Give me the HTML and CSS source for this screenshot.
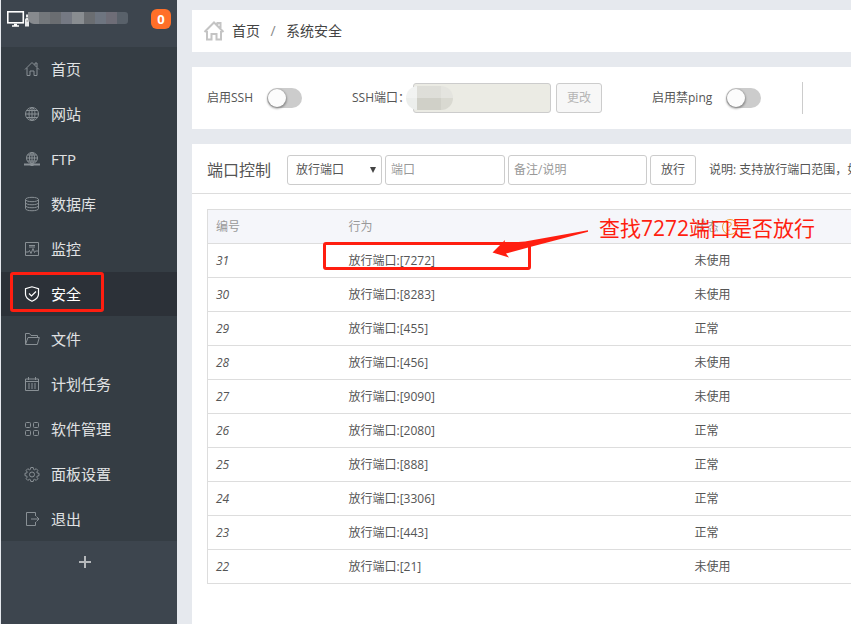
FILE: index.html
```html
<!DOCTYPE html>
<html lang="zh-CN">
<head>
<meta charset="utf-8">
<title>系统安全</title>
<link rel="stylesheet" href="styles.css">
</head>
<body>
<div class="layout">
  <aside class="sidebar">
    <header class="host">
      <svg class="host-icon" viewBox="0 0 22 18" fill="none" stroke="#fff"><rect x=".8" y="1.800" width="15.500" height="11" stroke-width="1.600"/><path d="M5 16h7M7 14.500h3" stroke-width="1.600"/><path d="M19 4.500h3v3h-3zM18 9.500l1-1.500h3v8.500h-4z" fill="#e8e9ea" stroke="none"/><path d="M19.500 11h2" stroke="#888"/></svg>
      <span class="mosaic"><i class="m1"></i><i class="m2"></i><i class="m3"></i><i class="m4"></i><i class="m5"></i><i class="m3"></i><i class="m6"></i><i class="m7"></i><i class="m8"></i></span>
      <span class="badge">0</span>
    </header>
    <nav class="menu">
      <a href="#"><svg viewBox="0 0 16 16"><path d="M1 8.500 8 1.500l7 7M3 7v7.500h3V10h4v4.500h3V7M11 4V2h2v4"/></svg>首页</a>
      <a href="#"><svg viewBox="0 0 16 16"><circle cx="8" cy="8" r="6.500"/><ellipse cx="8" cy="8" rx="3" ry="6.500"/><path d="M8 1.500v13M1.500 8h13M2.500 4.500h11M2.500 11.500h11"/></svg>网站</a>
      <a href="#"><svg viewBox="0 0 16 16"><circle cx="8" cy="7" r="5.500"/><ellipse cx="8" cy="7" rx="2.500" ry="5.500"/><path d="M8 1.500v11M2.500 7h11M3.500 4h9M3.500 10h9"/><path d="M0 13.500h16M6.500 14h3" stroke-width="2"/></svg>FTP</a>
      <a href="#"><svg viewBox="0 0 16 16"><ellipse cx="8" cy="3.500" rx="6.500" ry="2.200"/><path d="M1.500 3.500v9c0 3 13 3 13 0v-9M1.500 6.500c0 3 13 3 13 0M1.500 9.500c0 3 13 3 13 0"/></svg>数据库</a>
      <a href="#"><svg viewBox="0 0 16 16"><path d="M1.500 1.500h13v13h-13zM5 4.500h6M5 6h6M2 11h2.500l1-1.500 1.500 3 2-5 1.500 4 1-1.500h3"/></svg>监控</a>
      <a href="#" class="active" aria-current="page"><svg viewBox="0 0 16 16"><path d="M8 .8 1.500 2.800v5.500c0 3.500 3.500 5.700 6.500 7 3-1.300 6.500-3.500 6.500-7V2.800zM5 7.500l2.500 2.500L12 5.500"/></svg>安全</a>
      <a href="#"><svg viewBox="0 0 16 16"><path d="M1.500 13V2.500h4l1.500 2h6.500v2M1.500 13.500 4 6.500h11.300l-2 7z"/></svg>文件</a>
      <a href="#"><svg viewBox="0 0 16 16"><path d="M1.500 3h13v11.500h-13zM1.500 5.500h13M4.500 1v3M11.500 1v3"/><path d="M4 8h8M4 10h8M4 12h8" stroke-dasharray="2 1"/></svg>计划任务</a>
      <a href="#"><svg viewBox="0 0 16 16"><rect x="1.500" y="1.500" width="5" height="5" rx="1"/><rect x="9.500" y="1.500" width="5" height="5" rx="1"/><rect x="1.500" y="9.500" width="5" height="5" rx="1"/><rect x="9.500" y="9.500" width="5" height="5" rx="1"/></svg>软件管理</a>
      <a href="#"><svg viewBox="0 0 16 16"><path d="M6.800 1.500h2.400l.4 1.900 1 .4 1.600-1.100 1.700 1.700-1.100 1.600.4 1 1.800.3v2.400l-1.800.4-.4 1 1.100 1.600-1.700 1.700-1.600-1.100-1 .4-.4 1.800H6.800l-.4-1.800-1-.4-1.600 1.100-1.700-1.700 1.100-1.600-.4-1L1 9.700V7.300L2.800 7l.4-1-1.100-1.600 1.700-1.700 1.600 1.100 1-.4z"/><circle cx="8" cy="8.500" r="2.500"/></svg>面板设置</a>
      <a href="#"><svg viewBox="0 0 16 16"><path d="M11.500 5V1.500h-9v13h9V11M7 8h8M12.500 5.500 15 8l-2.500 2.500"/></svg>退出</a>
    </nav>
    <button class="add" type="button" aria-label="添加"><svg viewBox="0 0 14 14"><path d="M7 1v12M1 7h12"/></svg></button>
  </aside>

  <main class="main">
    <nav class="card crumbs">
      <svg viewBox="0 0 22 22"><path d="M1.500 12 11 2.500l9.500 9.500M4 11v8.500h4.500V14h5v5.500H18V11M14.500 5V3h3v6"/></svg>
      <a href="#">首页</a><span class="slash">/</span><span>系统安全</span>
    </nav>

    <section class="card switches">
      <label class="toggle-field ssh">启用SSH<input class="toggle" type="checkbox"></label>
      <div class="port-field">
        <label for="ssh-port">SSH端口：</label>
        <span class="port-box"><input id="ssh-port" type="text" disabled><span class="blur"></span></span>
        <button type="button" disabled>更改</button>
      </div>
      <label class="toggle-field">启用禁ping<input class="toggle" type="checkbox"></label>
      <span class="divider"></span>
    </section>

    <section class="card ports">
      <form class="toolbar">
        <h2>端口控制</h2>
        <span class="select-box"><select aria-label="类型"><option>放行端口</option></select></span>
        <input class="port" type="text" placeholder="端口" aria-label="端口">
        <input class="note" type="text" placeholder="备注/说明" aria-label="备注/说明">
        <button type="button">放行</button>
        <span class="hint">说明: 支持放行端口范围，如</span>
      </form>
      <div class="table-wrap">
        <table>
          <thead><tr><th class="c-id">编号</th><th class="c-act">行为</th><th>状态 <span class="help">?</span></th></tr></thead>
          <tbody>
            <tr><td>31</td><td>放行端口:[7272]</td><td>未使用</td></tr>
            <tr><td>30</td><td>放行端口:[8283]</td><td>未使用</td></tr>
            <tr><td>29</td><td>放行端口:[455]</td><td>正常</td></tr>
            <tr><td>28</td><td>放行端口:[456]</td><td>未使用</td></tr>
            <tr><td>27</td><td>放行端口:[9090]</td><td>未使用</td></tr>
            <tr><td>26</td><td>放行端口:[2080]</td><td>正常</td></tr>
            <tr><td>25</td><td>放行端口:[888]</td><td>正常</td></tr>
            <tr><td>24</td><td>放行端口:[3306]</td><td>正常</td></tr>
            <tr><td>23</td><td>放行端口:[443]</td><td>正常</td></tr>
            <tr><td>22</td><td>放行端口:[21]</td><td>未使用</td></tr>
          </tbody>
        </table>
        <span class="mark mark-row"></span>
        <svg class="arrow" viewBox="0 0 98 30"><path d="M.5 23.500 13 11l-.5 3L33 12.500 96 1.300v1.400L38 18l-24 6.500 3 4z" fill="#ff1e10"/></svg>
        <span class="callout">查找7272端口是否放行</span>
      </div>
    </section>
  </main>
</div>
</body>
</html>
```
FILE: styles.css
```css
* { box-sizing: border-box; }

body {
  margin: 0;
  background: #e6e9ee;
  color: #555;
  font: 12px/18px "Open Sans", "Noto Sans CJK SC", sans-serif;
  overflow-x: hidden;
}

a { color: inherit; text-decoration: none; }

button, input, select { font: inherit; color: inherit; }

.layout { display: flex; min-height: 100vh; }

/* sidebar */
.sidebar {
  flex: 0 0 176px;
  margin: 0 15px 0 1px;
  background: #3d454e;
}

.host {
  display: flex;
  align-items: flex-start;
  height: 47px;
  padding: 9px 6px 0;
}

.host-icon { flex: none; width: 22px; height: 18px; margin-top: 1px; }

.mosaic {
  display: flex;
  width: 100px;
  height: 12px;
  margin-top: 3px;
  margin-left: -1px;
  border-radius: 0 3px 3px 6px;
  overflow: hidden;
}

.mosaic i { flex: 1; }
.m1 { background: #878a8e; }
.m2 { background: #73777b; }
.m3 { background: #6a6d71; }
.m4 { background: #757983; }
.m5 { background: #898d91; }
.m6 { background: #6e7580; }
.m7 { background: #6e6d77; }
.m8 { background: #59616a; }

.badge {
  width: 20px;
  height: 20px;
  margin-left: auto;
  border-radius: 6px;
  background: #ff6f28;
  color: #fff;
  font-size: 13px;
  font-weight: bold;
  line-height: 20px;
  text-align: center;
}

.menu {
  display: grid;
  grid-auto-rows: 44px;
  gap: 1px;
  background: #353d44;
}

.menu a {
  display: flex;
  align-items: center;
  gap: 11px;
  padding-left: 23px;
  color: #e0e2e3;
  font-size: 15px;
}

.menu svg {
  width: 16px;
  height: 16px;
  fill: none;
  stroke: #899095;
}

.menu .active {
  position: relative;
  background: #2c3138;
  color: #fff;
}

.menu .active svg { stroke: #fff; stroke-width: 1.2; }

.menu .active::after {
  content: "";
  position: absolute;
  inset: 0 73px 4px 9px;
  border: 3px solid #ff1e10;
  border-radius: 3px;
}

.add {
  display: block;
  width: 100%;
  height: 42px;
  padding: 0 8px 0 0;
  border: 0;
  background: none;
}

.add svg {
  display: block;
  width: 14px;
  height: 14px;
  margin: auto;
  fill: none;
  stroke: #b5b8bb;
  stroke-width: 2;
}

/* main */
.main {
  display: flex;
  flex: 1;
  flex-direction: column;
  gap: 15px;
  min-width: 0;
  padding-top: 10px;
}

.card { background: #fff; white-space: nowrap; overflow: hidden; }

.crumbs {
  display: flex;
  align-items: center;
  height: 42px;
  padding-left: 11px;
  color: #444;
  font-size: 14px;
}

.crumbs svg {
  width: 22px;
  height: 22px;
  margin-right: 7px;
  fill: none;
  stroke: #c4c4c4;
  stroke-width: 2;
}

.slash { width: 26px; text-align: center; color: #888; }

.switches {
  display: flex;
  align-items: center;
  height: 62px;
  padding-left: 15px;
}

.toggle-field { display: flex; align-items: center; gap: 14px; }
.ssh { margin-right: 50px; }

.toggle {
  appearance: none;
  width: 35px;
  height: 20px;
  margin: 0;
  border-radius: 10px;
  background: #ccc;
}

.toggle::before {
  content: "";
  display: block;
  width: 18px;
  height: 18px;
  margin: 1px;
  border-radius: 50%;
  background: #fcfcfc;
  box-shadow: 0 1px 2px 1px rgba(0, 0, 0, .3);
}

.port-field { display: flex; align-items: center; margin-right: 50px; }
.port-field label { width: 61px; }
.port-box { position: relative; margin-right: 5px; }

input[type="text"], select, .ports button, .port-field button {
  display: block;
  height: 30px;
  padding: 0 5px;
  border: 1px solid #ccc;
  border-radius: 3px;
  background: #fff;
}

.port-box input[type="text"] { width: 138px; background: #ebebe4; }

.blur {
  position: absolute;
  top: 3px;
  left: -7px;
  width: 47px;
  height: 24px;
  border-radius: 12px;
  background:
    linear-gradient(rgba(255, 255, 255, .3) 50%, transparent 50%),
    linear-gradient(90deg, #eceeec 11px, #d0d0c8 11px 35px, #d9d9d1 35px);
}

.port-field button { width: 46px; background: #f7f7f7; color: #b5b5b5; }
.ports .toolbar button { width: 46px; }

.divider { width: 1px; height: 32px; margin-left: 41px; background: #ccc; }

/* port rules */
.ports { flex: 1; }

.toolbar {
  display: flex;
  align-items: center;
  gap: 3px;
  height: 50px;
  padding: 2px 0 0 15px;
  border-bottom: 1px solid #ddd;
}

.toolbar > * { flex: none; }

.toolbar h2 {
  width: 77px;
  margin: 0;
  font-size: 16px;
  font-weight: normal;
}

.select-box { position: relative; }

.select-box::after {
  content: "";
  position: absolute;
  top: 12px;
  right: 6px;
  border: solid transparent;
  border-width: 6px 3px 0;
  border-top-color: #444;
}

.toolbar select { width: 95px; padding-left: 8px; appearance: none; }
.toolbar .port { width: 120px; }
.toolbar .note { width: 139px; }
::placeholder { color: #999; opacity: 1; }
.hint { margin-left: 10px; }

.table-wrap { position: relative; padding: 15px 0 40px 15px; }

table {
  width: 100%;
  border-collapse: collapse;
  border: 1px solid #ddd;
  border-right: 0;
  table-layout: fixed;
}

th, td {
  height: 34px;
  padding: 0 8px;
  border-bottom: 1px solid #ddd;
  font-weight: normal;
  text-align: left;
}

th { background: #f5f6fa; color: #999; }
td:first-child { font-style: italic; }
.c-id { width: 133px; }
.c-act { width: 346px; }

.help {
  display: inline-block;
  width: 16px;
  height: 16px;
  border: 1px solid #f39a32;
  border-radius: 50%;
  color: #f39a32;
  line-height: 14px;
  text-align: center;
}

.mark-row {
  position: absolute;
  top: 48px;
  left: 131px;
  width: 208px;
  height: 28px;
  border: 3px solid #ff1e10;
  border-radius: 3px;
}

.arrow { position: absolute; top: 35px; left: 300px; width: 98px; height: 30px; }

.callout {
  position: absolute;
  top: 20px;
  left: 407px;
  color: #ff1e10;
  font-size: 21px;
  line-height: 28px;
}
```
